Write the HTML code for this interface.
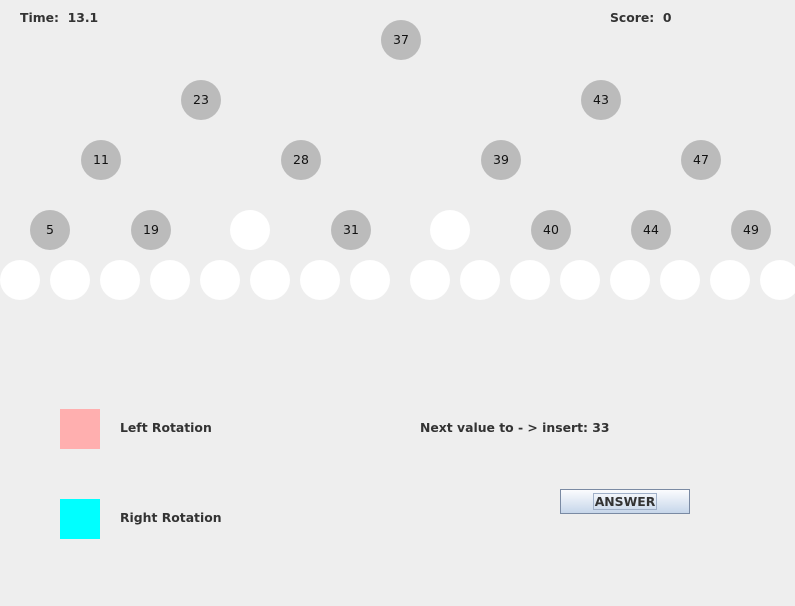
<!DOCTYPE html><html><head><style>
body{margin:0;width:795px;height:606px;background:#eeeeee;position:relative;overflow:hidden;font-family:"DejaVu Sans",sans-serif;}
.c{position:absolute;width:40px;height:40px;border-radius:50%;background:#bbbbbb;font-size:12.5px;color:#111;text-align:center;line-height:40px;}
.w{background:#fff;}
.t{position:absolute;font-size:12.4px;font-weight:bold;color:#333;white-space:pre;}
</style></head><body>
<div class="t" style="left:20px;top:10px">Time:  13.1</div>
<div class="t" style="left:610px;top:10px">Score:  0</div>
<div class="c" style="left:381px;top:20px">37</div>
<div class="c" style="left:181px;top:80px">23</div>
<div class="c" style="left:581px;top:80px">43</div>
<div class="c" style="left:81px;top:140px">11</div>
<div class="c" style="left:281px;top:140px">28</div>
<div class="c" style="left:481px;top:140px">39</div>
<div class="c" style="left:681px;top:140px">47</div>
<div class="c" style="left:30px;top:210px">5</div>
<div class="c" style="left:131px;top:210px">19</div>
<div class="c w" style="left:230px;top:210px"></div>
<div class="c" style="left:331px;top:210px">31</div>
<div class="c w" style="left:430px;top:210px"></div>
<div class="c" style="left:531px;top:210px">40</div>
<div class="c" style="left:631px;top:210px">44</div>
<div class="c" style="left:731px;top:210px">49</div>
<div class="c w" style="left:0;top:260px"></div>
<div class="c w" style="left:50px;top:260px"></div>
<div class="c w" style="left:100px;top:260px"></div>
<div class="c w" style="left:150px;top:260px"></div>
<div class="c w" style="left:200px;top:260px"></div>
<div class="c w" style="left:250px;top:260px"></div>
<div class="c w" style="left:300px;top:260px"></div>
<div class="c w" style="left:350px;top:260px"></div>
<div class="c w" style="left:410px;top:260px"></div>
<div class="c w" style="left:460px;top:260px"></div>
<div class="c w" style="left:510px;top:260px"></div>
<div class="c w" style="left:560px;top:260px"></div>
<div class="c w" style="left:610px;top:260px"></div>
<div class="c w" style="left:660px;top:260px"></div>
<div class="c w" style="left:710px;top:260px"></div>
<div class="c w" style="left:760px;top:260px"></div>
<div style="position:absolute;left:60px;top:409px;width:40px;height:40px;background:#ffafaf"></div>
<div style="position:absolute;left:60px;top:499px;width:40px;height:40px;background:#00ffff"></div>
<div class="t" style="left:120px;top:420px">Left Rotation</div>
<div class="t" style="left:120px;top:510px">Right Rotation</div>
<div class="t" style="left:420px;top:420px">Next value to - &gt; insert: 33</div>
<div style="position:absolute;left:560px;top:489px;width:128px;height:23px;border:1px solid #7a8aa3;background:linear-gradient(#fbfcfe,#c6d6ea);text-align:center;">
<span style="display:inline-block;margin-top:3px;border:1px solid #a0b0c8;padding:0 1px;font-size:12.4px;font-weight:bold;color:#333;line-height:15px">ANSWER</span></div>
</body></html>
